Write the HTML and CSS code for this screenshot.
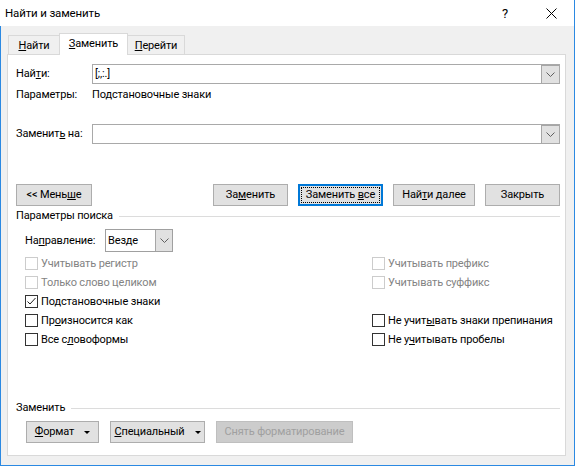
FILE: index.html
```html
<!DOCTYPE html>
<html lang="ru">
<head>
<meta charset="utf-8">
<title>Найти и заменить</title>
<link rel="stylesheet" href="styles.css">
</head>
<body>
<div class="window">
  <div class="titlebar">
    <span class="title">Найти и заменить</span>
    <span class="tb-btn help">?</span>
    <span class="tb-btn close">
      <svg width="11" height="11" viewBox="0 0 11 11"><path d="M0.5 0.5 L10.5 10.5 M10.5 0.5 L0.5 10.5" stroke="#000" stroke-width="1" fill="none"/></svg>
    </span>
  </div>
  <div class="body">
    <div class="tabs">
      <div class="tab tab-first"><u>Н</u>айти</div>
      <div class="tab tab-active"><u>З</u>аменить</div>
      <div class="tab tab-last"><u>П</u>ерейти</div>
    </div>
    <div class="panel">
      <div class="row find-row">
        <span class="lbl">Най<u>т</u>и:</span>
        <div class="combo">
          <span class="combo-text">[;,:.]</span>
          <span class="combo-btn"><svg width="9" height="5" viewBox="0 0 9 5"><path d="M0.5 0.5 L4.5 4.5 L8.5 0.5" stroke="#606060" stroke-width="1" fill="none"/></svg></span>
        </div>
      </div>
      <div class="row params-row">
        <span class="lbl">Параметры:</span>
        <span>Подстановочные знаки</span>
      </div>
      <div class="row replace-row">
        <span class="lbl">Заменит<u>ь</u> на:</span>
        <div class="combo">
          <span class="combo-text"></span>
          <span class="combo-btn"><svg width="9" height="5" viewBox="0 0 9 5"><path d="M0.5 0.5 L4.5 4.5 L8.5 0.5" stroke="#606060" stroke-width="1" fill="none"/></svg></span>
        </div>
      </div>
      <div class="row btn-row">
        <button class="btn w-less">&lt;&lt; Мень<u>ш</u>е</button>
        <div class="grow"></div>
        <div class="btn-group">
          <button class="btn w-repl">За<u>м</u>енить</button>
          <button class="btn btn-default w-all">Заменить <u>в</u>се</button>
          <button class="btn w-next">Най<u>т</u>и далее</button>
          <button class="btn w-close">Закрыть</button>
        </div>
      </div>
      <div class="group-title search-title">
        <span>Параметры поиска</span>
        <div class="group-line"></div>
      </div>
      <div class="row dir-row">
        <span class="dir-lbl">На<u>п</u>равление:</span>
        <div class="select">
          <span class="select-text">Везде</span>
          <span class="select-btn"><svg width="9" height="5" viewBox="0 0 9 5"><path d="M0.5 0.5 L4.5 4.5 L8.5 0.5" stroke="#606060" stroke-width="1" fill="none"/></svg></span>
        </div>
      </div>
      <div class="opts">
        <div class="chk disabled"><span class="box"></span><span>Учитывать регистр</span></div>
        <div class="chk disabled"><span class="box"></span><span>Учитывать префикс</span></div>
        <div class="chk disabled"><span class="box"></span><span>Только слово целиком</span></div>
        <div class="chk disabled"><span class="box"></span><span>Учитывать суффикс</span></div>
        <div class="chk"><span class="box"><svg width="11" height="11" viewBox="0 0 11 11"><path d="M1.5 5.5 L4 8 L9.5 2" stroke="#222" stroke-width="1" fill="none"/></svg></span><span>По<u>д</u>становочные знаки</span></div>
        <div></div>
        <div class="chk"><span class="box"></span><span>Пр<u>о</u>износится как</span></div>
        <div class="chk"><span class="box"></span><span>Не учит<u>ы</u>вать знаки препинания</span></div>
        <div class="chk"><span class="box"></span><span>Все с<u>л</u>овоформы</span></div>
        <div class="chk"><span class="box"></span><span>Не у<u>ч</u>итывать пробелы</span></div>
      </div>
      <div class="group-title replace-title">
        <span>Заменить</span>
        <div class="group-line"></div>
      </div>
      <div class="row bottom-row">
        <button class="btn btn-menu w-fmt"><span><u>Ф</u>ормат</span><span class="tri"></span></button>
        <button class="btn btn-menu w-spec"><span><u>С</u>пециальный</span><span class="tri"></span></button>
        <button class="btn btn-disabled w-clear">Снять форматирование</button>
      </div>
    </div>
  </div>
</div>
</body>
</html>
```
FILE: styles.css
```css
* { box-sizing: border-box; }
html, body { margin: 0; padding: 0; }
body {
  width: 575px;
  height: 466px;
  overflow: hidden;
  background: #fff;
  font-family: "Roboto", "Noto Sans", sans-serif;
  font-size: 11px;
  letter-spacing: -0.15px;
  color: #000;
}
u { text-decoration: underline; text-underline-offset: 1px; }

.window {
  width: 575px;
  height: 466px;
  display: flex;
  flex-direction: column;
  border-right: 1px solid #2b89e2;
  border-bottom: 1px solid #2b89e2;
}

.titlebar {
  height: 26px;
  flex: none;
  display: flex;
  align-items: center;
  background: #fff;
  padding-left: 5px;
}
.title { flex: 1; line-height: 16px; font-size: 11.5px; }
.tb-btn {
  width: 46px;
  height: 26px;
  display: flex;
  align-items: center;
  justify-content: center;
}
.help { font-size: 13px; }

.body {
  flex: 1;
  display: flex;
  flex-direction: column;
  background: #f0f0f0;
  border-left: 1px solid #2b89e2;
  padding: 7px 8px 9px 6px;
}

.tabs {
  display: flex;
  align-items: flex-end;
  height: 21px;
  padding-left: 1px;
  flex: none;
}
.tab {
  height: 19px;
  border: 1px solid #d9d9d9;
  border-bottom: none;
  background: #f0f0f0;
  text-align: center;
  line-height: 18px;
  padding-top: 1px;
  white-space: nowrap;
}
.tab-first { width: 51px; border-right: none; }
.tab-active {
  width: 69px;
  height: 22px;
  margin-bottom: -1px;
  background: #fff;
  position: relative;
  line-height: 20px;
  padding-top: 0;
}
.tab-last { width: 57px; border-left: none; }

.panel {
  flex: 1;
  display: flex;
  flex-direction: column;
  background: #fff;
  border: 1px solid #d9d9d9;
  padding: 9px 5px 12px 8px;
}

.row { display: flex; align-items: center; }
.lbl { width: 76px; flex: none; line-height: 16px; white-space: nowrap; }

.find-row { height: 20px; }
.params-row { height: 16px; margin-top: 3px; line-height: 16px; white-space: nowrap; }
.replace-row { height: 20px; margin-top: 21px; }

.combo {
  flex: 1;
  height: 20px;
  display: flex;
  border: 1px solid #a9a9a9;
  background: #fff;
}
.combo-text { flex: 1; padding-left: 2px; line-height: 18px; }
.combo-btn {
  width: 18px;
  height: 18px;
  background: #e1e1e1;
  border: 1px solid #a6a6a6;
  border-right: none;
  border-bottom: none;
  display: flex;
  align-items: center;
  justify-content: center;
}

.btn-row { height: 22px; margin-top: 40px; }
.grow { flex: 1; }
.btn-group { display: flex; gap: 10px; }

.btn {
  height: 22px;
  padding: 0;
  margin: 0;
  font-family: inherit;
  font-size: 11px;
  letter-spacing: -0.15px;
  color: #000;
  background: #e1e1e1;
  border: 1px solid #adadad;
  line-height: 18px;
  text-align: center;
  white-space: nowrap;
}
.btn-default {
  border: 2px solid #0078d7;
  outline: 1px dotted #000;
  outline-offset: -4px;
}
.w-less { width: 76px; }
.w-repl { width: 75px; }
.w-all { width: 85px; }
.w-next { width: 82px; }
.w-close { width: 75px; }

.group-title {
  display: flex;
  align-items: center;
  height: 16px;
  line-height: 16px;
  flex: none;
  white-space: nowrap;
}
.group-line {
  flex: 1;
  height: 1px;
  background: #dcdcdc;
  margin-left: 6px;
  margin-top: 1px;
}
.search-title { margin-top: 2px; }

.dir-row { height: 23px; margin-top: 5px; padding-left: 9px; }
.dir-lbl { width: 80px; flex: none; white-space: nowrap; }
.select {
  width: 68px;
  height: 23px;
  display: flex;
  border: 1px solid #a0a0a0;
  background: #fff;
}
.select-text { flex: 1; padding-left: 2px; line-height: 21px; }
.select-btn {
  width: 17px;
  background: #e1e1e1;
  border-left: 1px solid #a6a6a6;
  display: flex;
  align-items: center;
  justify-content: center;
}

.opts {
  display: grid;
  grid-template-columns: 347px 1fr;
  grid-auto-rows: 19px;
  margin-top: 2px;
  padding-left: 9px;
}
.chk { display: flex; align-items: center; gap: 3px; white-space: nowrap; }
.box {
  width: 13px;
  height: 13px;
  flex: none;
  border: 1px solid #333;
  background: #fff;
  display: flex;
  align-items: center;
  justify-content: center;
}
.chk.disabled { color: #838383; }
.chk.disabled .box { border-color: #cccccc; }

.replace-title { margin-top: auto; }
.bottom-row { height: 22px; margin-top: 5px; padding-left: 10px; gap: 11px; }
.btn-menu {
  display: flex;
  align-items: center;
  justify-content: center;
  gap: 10px;
}
.tri {
  width: 0;
  height: 0;
  border-left: 3px solid transparent;
  border-right: 3px solid transparent;
  border-top: 3px solid #000;
  margin-top: 1px;
}
.w-fmt { width: 73px; }
.w-spec { width: 95px; }
.w-clear { width: 137px; }
.btn-disabled {
  background: #cccccc;
  border-color: #bfbfbf;
  color: #a0a0a0;
}
```
